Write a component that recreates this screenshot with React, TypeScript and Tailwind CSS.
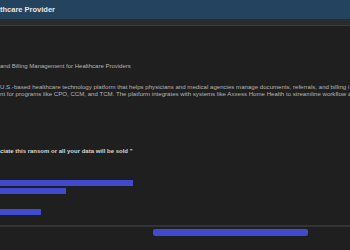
import React from "react";

export default function App() {
  const font = { fontFamily: '"Liberation Sans", Arial, sans-serif' };
  return (
    <div className="w-[350px] h-[250px] overflow-hidden bg-[#1f1f1f] flex flex-col" style={font}>
      <div className="h-[19px] shrink-0 bg-[#24435f] flex items-center pt-[1px]">
        <span className="text-[7.5px] font-bold text-[#e6e6e6] whitespace-nowrap leading-none">thcare Provider</span>
      </div>
      <div className="h-[7px] shrink-0 bg-[#2b2b2b] border-b border-[#3b3b3b]" />
      <div className="flex flex-col">
        <div className="mt-[37px] text-[6px] leading-[7px] text-[#b5b5b5] whitespace-nowrap">
          and Billing Management for Healthcare Providers
        </div>
        <div className="mt-[13px] text-[6.1px] leading-[7px] text-[#b5b5b5] whitespace-nowrap">
          <div>U.S.-based healthcare technology platform that helps physicians and medical agencies manage documents, referrals, and billing i</div>
          <div>nt for programs like CPO, CCM, and TCM. The platform integrates with systems like Axxess Home Health to streamline workflow a</div>
        </div>
        <div className="mt-[51px] text-[6px] leading-[7px] font-bold text-[#d6d6d6] whitespace-nowrap">
          ciate this ransom or all your data will be sold "
        </div>
        <div className="mt-[25px] flex flex-col">
          <div className="h-[6px] w-[133px] bg-[#4149cf]" />
          <div className="mt-[2px] h-[6px] w-[66px] bg-[#4149cf]" />
          <div className="mt-[15px] h-[6px] w-[41px] bg-[#4149cf]" />
        </div>
        <div className="mt-[10px] h-[2px] bg-[#333333]" />
        <div className="mt-[2px] pl-[153px]">
          <div className="h-[7px] w-[155px] rounded-[2px] bg-[#4149cf]" />
        </div>
      </div>
    </div>
  );
}
